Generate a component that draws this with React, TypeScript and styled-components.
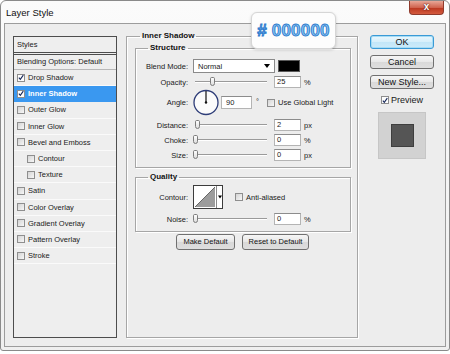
import React from 'react';
import styled, { createGlobalStyle } from 'styled-components';

const GlobalStyle = createGlobalStyle`
  html, body {
    margin: 0;
    padding: 0;
    background: #ffffff;
  }
  body {
    font-family: "Liberation Sans", Arial, sans-serif;
    color: #1a1a1a;
  }
`;

interface StyleItem {
  label: string;
  checked?: boolean;
  selected?: boolean;
  indent?: boolean;
}

const styleItems: StyleItem[] = [
  { label: 'Drop Shadow', checked: true },
  { label: 'Inner Shadow', checked: true, selected: true },
  { label: 'Outer Glow' },
  { label: 'Inner Glow' },
  { label: 'Bevel and Emboss' },
  { label: 'Contour', indent: true },
  { label: 'Texture', indent: true },
  { label: 'Satin' },
  { label: 'Color Overlay' },
  { label: 'Gradient Overlay' },
  { label: 'Pattern Overlay' },
  { label: 'Stroke' },
];

const CheckBox: React.FC<{ checked?: boolean }> = ({ checked }) => (
  <Box $checked={checked}>
    {checked && (
      <svg width="7" height="7" viewBox="0 0 7 7">
        <path d="M1 3.6 L2.7 5.6 L6.2 0.8" stroke="#17285a" strokeWidth="1.3" fill="none" />
      </svg>
    )}
  </Box>
);

const Slider: React.FC<{ at: number }> = ({ at }) => (
  <Track>
    <Thumb style={{ left: at }} />
  </Track>
);

const App: React.FC = () => {
  return (
    <>
      <GlobalStyle />
      <Window>
        <TitleBar>
          <Title>Layer Style</Title>
          <CloseButton>x</CloseButton>
        </TitleBar>
        <Client>
          <StylesList>
            <ListHeader>Styles</ListHeader>
            <BlendingRow>Blending Options: Default</BlendingRow>
            {styleItems.map(item => (
              <ListItem key={item.label} $selected={item.selected} $indent={item.indent}>
                <CheckBox checked={item.checked} />
                <span>{item.label}</span>
              </ListItem>
            ))}
          </StylesList>

          <MainGroup>
            <MainLegend>Inner Shadow</MainLegend>
            <SubGroup>
              <SubLegend>Structure</SubLegend>
              <Row $h={14} $mt={6}>
                <Label>Blend Mode:</Label>
                <Select>
                  <span>Normal</span>
                  <svg width="6" height="4" viewBox="0 0 6 4">
                    <polygon points="0,0 6,0 3,4" fill="#000" />
                  </svg>
                </Select>
                <Swatch />
              </Row>
              <Row $h={14} $mt={2}>
                <Label>Opacity:</Label>
                <Slider at={17} />
                <Input>25</Input>
                <Unit>%</Unit>
              </Row>
              <Row $h={27} $mt={0}>
                <Label>Angle:</Label>
                <svg width="26" height="27" viewBox="0 0 26 27">
                  <circle cx="13" cy="13.5" r="12" fill="#fbfbfb" stroke="#2e3d78" strokeWidth="1.3" />
                  <line x1="13" y1="13.5" x2="13" y2="2" stroke="#111" strokeWidth="1.2" />
                  <circle cx="13" cy="13.5" r="1.2" fill="#111" />
                </svg>
                <AngleInput>90</AngleInput>
                <Degree>°</Degree>
                <CheckSpacer $ml={8}>
                  <CheckBox />
                </CheckSpacer>
                <Caption>Use Global Light</Caption>
              </Row>
              <Row $h={12} $mt={3}>
                <Label>Distance:</Label>
                <Slider at={2} />
                <Input>2</Input>
                <Unit>px</Unit>
              </Row>
              <Row $h={12} $mt={3}>
                <Label>Choke:</Label>
                <Slider at={0} />
                <Input>0</Input>
                <Unit>%</Unit>
              </Row>
              <Row $h={12} $mt={3}>
                <Label>Size:</Label>
                <Slider at={0} />
                <Input>0</Input>
                <Unit>px</Unit>
              </Row>
            </SubGroup>

            <QualityGroup>
              <SubLegend>Quality</SubLegend>
              <Row $h={24} $mt={3}>
                <Label>Contour:</Label>
                <svg width="30" height="24" viewBox="0 0 30 24">
                  <rect x="0.5" y="0.5" width="29" height="23" fill="#fff" stroke="#3c3c3c" />
                  <polygon points="2,22 22,2 22,22" fill="#9c9c9c" />
                  <line x1="2" y1="22" x2="22" y2="2" stroke="#666" />
                  <line x1="23.5" y1="1" x2="23.5" y2="23" stroke="#8a8a8a" />
                  <polygon points="25,10.5 29,10.5 27,13.5" fill="#000" />
                </svg>
                <CheckSpacer $ml={12}>
                  <CheckBox />
                </CheckSpacer>
                <Caption>Anti-aliased</Caption>
              </Row>
              <Row $h={12} $mt={4}>
                <Label>Noise:</Label>
                <Slider at={0} />
                <Input>0</Input>
                <Unit>%</Unit>
              </Row>
            </QualityGroup>

            <DefaultButtons>
              <SmallButton $w={59}>Make Default</SmallButton>
              <SmallButton $w={67}>Reset to Default</SmallButton>
            </DefaultButtons>
          </MainGroup>

          <SideColumn>
            <DialogButton $primary>OK</DialogButton>
            <DialogButton>Cancel</DialogButton>
            <DialogButton>New Style...</DialogButton>
            <PreviewToggle>
              <CheckBox checked />
              <span>Preview</span>
            </PreviewToggle>
            <PreviewSwatch>
              <PreviewSquare />
            </PreviewSwatch>
          </SideColumn>
        </Client>

        <HexBadge>
          <HexText># 000000</HexText>
        </HexBadge>
      </Window>
    </>
  );
};

export default App;

const Window = styled.div`
  position: relative;
  box-sizing: border-box;
  width: 450px;
  height: 351px;
  border: 1px solid #8a8a8a;
  border-radius: 6px 6px 3px 3px;
  background: linear-gradient(#fbfbfb, #efefef);
  display: flex;
  flex-direction: column;
`;

const TitleBar = styled.div`
  height: 22px;
  display: flex;
  align-items: center;
  padding-left: 5px;
`;

const Title = styled.div`
  font-size: 9.5px;
  color: #111;
`;

const CloseButton = styled.div`
  align-self: flex-start;
  margin-left: auto;
  margin-right: 5px;
  width: 35px;
  height: 14px;
  box-sizing: border-box;
  border: 1px solid #8f3a2c;
  border-top: none;
  border-radius: 0 0 4px 4px;
  background: linear-gradient(#e8a797, #d0644f 50%, #b9361f 51%, #d45a3e);
  color: #fff;
  font: bold 10px "Liberation Sans", Arial, sans-serif;
  line-height: 11px;
  text-align: center;
  text-shadow: 0 0 2px #5a1a10, 0 0 1px #5a1a10;
`;

const Client = styled.div`
  flex: 1;
  margin: 0 3px 3px 3px;
  border: 1px solid #9c9c9c;
  background: #ededed;
  display: flex;
  align-items: stretch;
  padding: 12px 10px 8px 8px;
`;

const StylesList = styled.div`
  width: 104px;
  box-sizing: border-box;
  border: 1px solid #4d4d4d;
  background: #eeeeee;
  display: flex;
  flex-direction: column;
  font-size: 7.5px;
`;

const ListHeader = styled.div`
  height: 15px;
  line-height: 15px;
  padding-left: 3px;
  border-bottom: 3px double #4d4d4d;
`;

const BlendingRow = styled.div`
  height: 14px;
  line-height: 14px;
  padding-left: 3px;
  border-bottom: 1px solid #b8b8b8;
`;

const ListItem = styled.div<{ $selected?: boolean; $indent?: boolean }>`
  height: 15.2px;
  display: flex;
  align-items: center;
  gap: 3px;
  padding-left: ${p => (p.$indent ? 13 : 3)}px;
  border-bottom: 1px solid ${p => (p.$selected ? '#3a98f0' : '#fafafa')};
  background: ${p => (p.$selected ? '#3a98f0' : 'transparent')};
  color: ${p => (p.$selected ? '#ffffff' : '#1a1a1a')};
  font-weight: ${p => (p.$selected ? 'bold' : 'normal')};
`;

const Box = styled.div<{ $checked?: boolean }>`
  width: 8px;
  height: 8px;
  flex: none;
  box-sizing: border-box;
  border: 1px solid #8e8e8e;
  background: ${p => (p.$checked ? '#fdfdfd' : 'linear-gradient(135deg, #d4d4d4, #f7f7f7)')};
  display: flex;
  align-items: center;
  justify-content: center;
`;

const MainGroup = styled.fieldset`
  width: 232px;
  box-sizing: border-box;
  margin: -5px 0 0 9px;
  padding: 2px 0 0 0;
  border: 1px solid #a6a6a6;
  box-shadow: inset 1px 1px 0 #ffffff, 1px 1px 0 #ffffff;
  min-width: 0;
`;

const MainLegend = styled.legend`
  margin-left: 13px;
  padding: 0 2px;
  font-size: 8px;
  line-height: 10px;
  font-weight: bold;
  color: #111;
`;

const SubGroup = styled.fieldset`
  width: 216px;
  box-sizing: border-box;
  margin: 0 0 0 8px;
  padding: 0 0 6px 0;
  border: 1px solid #a6a6a6;
  box-shadow: inset 1px 1px 0 #ffffff, 1px 1px 0 #ffffff;
  min-width: 0;
`;

const QualityGroup = styled(SubGroup)`
  margin-top: 4px;
  padding-bottom: 6px;
`;

const SubLegend = styled.legend`
  margin-left: 12px;
  padding: 0 2px;
  font-size: 8px;
  line-height: 10px;
  font-weight: bold;
  color: #111;
`;

const Row = styled.div<{ $h: number; $mt: number }>`
  display: flex;
  align-items: center;
  height: ${p => p.$h}px;
  margin-top: ${p => p.$mt}px;
  font-size: 7.5px;
`;

const Label = styled.div`
  width: 52px;
  margin-right: 5px;
  text-align: right;
  flex: none;
`;

const Select = styled.div`
  width: 82px;
  height: 14px;
  box-sizing: border-box;
  border: 1px solid #8a8a8a;
  background: #ffffff;
  display: flex;
  align-items: center;
  justify-content: space-between;
  padding: 0 4px 0 4px;
`;

const Swatch = styled.div`
  width: 22px;
  height: 12px;
  margin-left: 3px;
  box-sizing: border-box;
  border: 1px solid #5a5a5a;
  background: #000000;
`;

const Track = styled.div`
  position: relative;
  width: 74px;
  height: 10px;
  flex: none;
  &::before {
    content: '';
    position: absolute;
    left: 2px;
    right: 0;
    top: 4px;
    border-top: 1px solid #9a9a9a;
    border-bottom: 1px solid #ffffff;
  }
`;

const Thumb = styled.div`
  position: absolute;
  top: 0;
  width: 5px;
  height: 9px;
  box-sizing: border-box;
  border: 1px solid #7c7c7c;
  border-radius: 2px 2px 3px 3px;
  background: linear-gradient(#ffffff, #dcdcdc);
`;

const Input = styled.div`
  width: 27px;
  height: 12px;
  margin-left: 7px;
  box-sizing: border-box;
  border: 1px solid #b4b4b4;
  border-top-color: #8c8c8c;
  background: #ffffff;
  padding-left: 2px;
  line-height: 10px;
`;

const AngleInput = styled(Input)`
  width: 31px;
  height: 13px;
  margin-left: 2px;
  line-height: 11px;
  padding-left: 4px;
`;

const Unit = styled.div`
  margin-left: 3px;
`;

const Degree = styled.div`
  margin-left: 4px;
  align-self: flex-start;
  margin-top: 8px;
`;

const CheckSpacer = styled.div<{ $ml: number }>`
  margin-left: ${p => p.$ml}px;
`;

const Caption = styled.div`
  margin-left: 3px;
`;

const DefaultButtons = styled.div`
  display: flex;
  justify-content: center;
  gap: 7px;
  margin-top: 2px;
  padding-left: 1px;
`;

const SmallButton = styled.div<{ $w: number }>`
  width: ${p => p.$w}px;
  height: 16px;
  box-sizing: border-box;
  border: 1px solid #707070;
  border-radius: 3px;
  background: linear-gradient(#f6f6f6, #e6e6e6 50%, #d8d8d8 51%, #dedede);
  font-size: 7.5px;
  line-height: 14px;
  text-align: center;
  color: #111;
`;

const SideColumn = styled.div`
  width: 64px;
  margin: -1px 0 0 12px;
  display: flex;
  flex-direction: column;
  align-items: center;
`;

const DialogButton = styled.div<{ $primary?: boolean }>`
  width: 64px;
  height: 14px;
  box-sizing: border-box;
  margin-bottom: 6px;
  border: 1px solid ${p => (p.$primary ? '#3a9ad6' : '#707070')};
  border-radius: 3px;
  background: ${p =>
    p.$primary
      ? 'linear-gradient(#eaf7fd, #d6effb 50%, #c2e6f8 51%, #cdebfa)'
      : 'linear-gradient(#f6f6f6, #e8e8e8 50%, #d9d9d9 51%, #dfdfdf)'};
  box-shadow: ${p => (p.$primary ? 'inset 0 0 0 1px #a6dcf5' : 'none')};
  font-size: 9px;
  line-height: 12px;
  text-align: center;
  color: #111;
`;

const PreviewToggle = styled.div`
  height: 12px;
  display: flex;
  align-items: center;
  gap: 2px;
  font-size: 9px;
  margin-top: -1px;
`;

const PreviewSwatch = styled.div`
  width: 48px;
  height: 47px;
  margin-top: 6px;
  box-sizing: border-box;
  border: 1px solid #c6c6c6;
  background: #d2d2d2;
  display: flex;
  align-items: center;
  justify-content: center;
`;

const PreviewSquare = styled.div`
  width: 23px;
  height: 23px;
  box-sizing: border-box;
  border: 1px solid #3e3e3e;
  background: #555555;
`;

const HexBadge = styled.div`
  position: absolute;
  left: 250px;
  top: 11px;
  width: 85px;
  height: 37px;
  box-sizing: border-box;
  border: 1px solid #d6d6d6;
  border-radius: 6px;
  background: #fdfdfd;
  box-shadow: 0 1px 3px rgba(0, 0, 0, 0.18);
  display: flex;
  align-items: center;
  justify-content: center;
`;

const HexText = styled.div`
  font: bold 17px "Liberation Sans", Arial, sans-serif;
  color: #8cc7f3;
  -webkit-text-stroke: 0.9px #2a78cc;
  letter-spacing: 0.2px;
`;
